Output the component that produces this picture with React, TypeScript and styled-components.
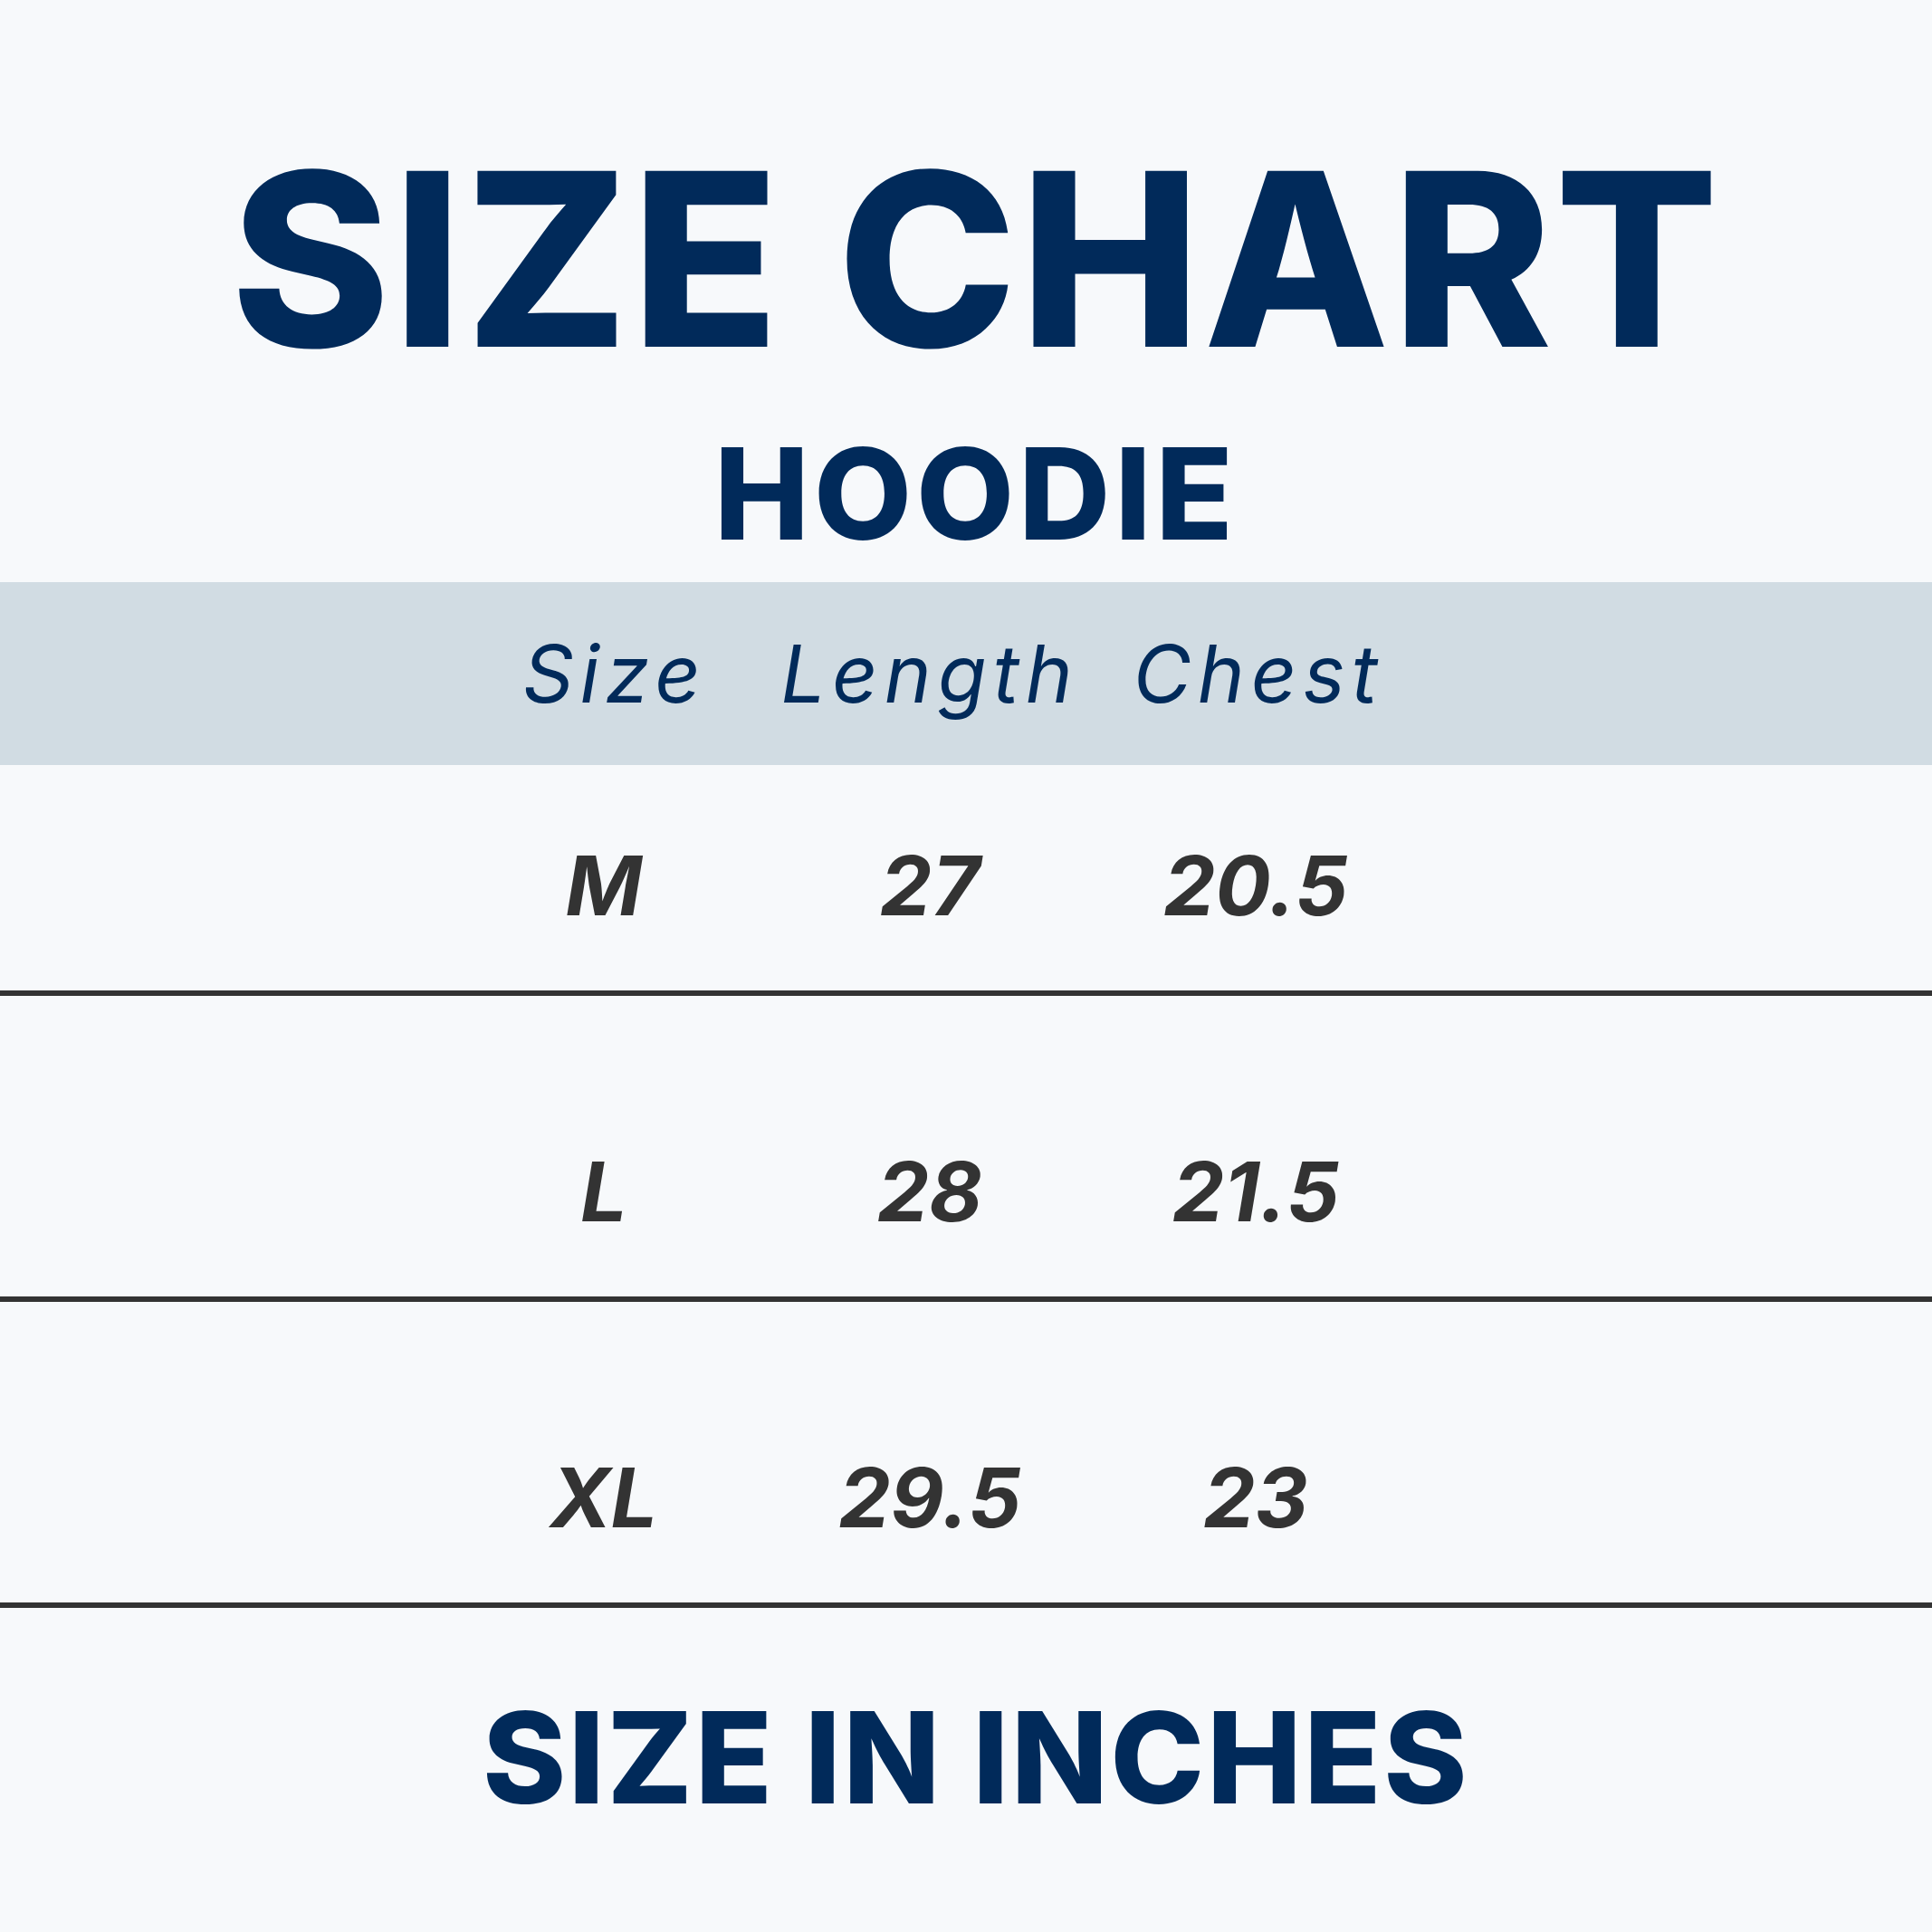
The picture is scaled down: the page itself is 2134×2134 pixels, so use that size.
import React from "react";
import styled, { createGlobalStyle } from "styled-components";

const GlobalStyle = createGlobalStyle`
  html, body {
    margin: 0;
    padding: 0;
    background: #f7f9fb;
  }
  body {
    font-family: Inter, "Noto Sans", "Liberation Sans", sans-serif;
  }
`;

const Page = styled.div`
  width: 2134px;
  min-height: 2134px;
  background: #f7f9fb;
  display: flex;
  flex-direction: column;
`;

const Heading = styled.header`
  display: flex;
  flex-direction: column;
  align-items: center;
  padding: 152px 0 0 22px;
  height: 643px;
  box-sizing: border-box;
`;

const Title = styled.h1`
  margin: 0;
  font-family: Inter, "Noto Sans", sans-serif;
  font-weight: 800;
  font-size: 267px;
  line-height: 1;
  letter-spacing: 3px;
  color: #012a5a;
`;

const Subtitle = styled.h2`
  margin: 56px 0 0;
  font-family: Inter, "Noto Sans", sans-serif;
  font-weight: 800;
  font-size: 140px;
  line-height: 1;
  letter-spacing: 5px;
  color: #012a5a;
`;

const Grid = styled.div`
  display: grid;
  grid-template-columns: repeat(3, 360px);
  padding-left: 487px;
  box-sizing: border-box;
  width: 100%;
`;

const HeaderBand = styled(Grid)`
  background: #d1dce3;
  height: 202px;
  align-items: center;
`;

const HeaderCell = styled.div<{ $shift?: number }>`
  text-align: center;
  font-family: Inter, "Noto Sans", sans-serif;
  font-style: italic;
  font-weight: 400;
  font-size: 88px;
  line-height: 1;
  letter-spacing: 7px;
  color: #012a5a;
  padding-left: ${(p) => p.$shift ?? 0}px;
`;

const Row = styled(Grid)<{ $top: number }>`
  padding-top: ${(p) => p.$top}px;
  padding-bottom: 70px;
  border-bottom: 6px solid #333333;
`;

const Cell = styled.div`
  text-align: center;
  font-family: Inter, "Noto Sans", sans-serif;
  font-style: italic;
  font-weight: 700;
  font-size: 91px;
  line-height: 1;
  color: #333333;
`;

const Footer = styled.footer`
  display: flex;
  justify-content: center;
  padding: 95px 0 0 22px;
`;

const FooterText = styled.div`
  font-family: Inter, "Noto Sans", sans-serif;
  font-weight: 800;
  font-size: 140px;
  line-height: 1;
  letter-spacing: 2.5px;
  color: #012a5a;
`;

const rows = [
  { size: "M", length: "27", chest: "20.5", top: 88 },
  { size: "L", length: "28", chest: "21.5", top: 171 },
  { size: "XL", length: "29.5", chest: "23", top: 171 },
];

export default function App() {
  return (
    <Page>
      <GlobalStyle />
      <Heading>
        <Title>SIZE CHART</Title>
        <Subtitle>HOODIE</Subtitle>
      </Heading>
      <HeaderBand>
        <HeaderCell $shift={24}>Size</HeaderCell>
        <HeaderCell $shift={-12}>Length</HeaderCell>
        <HeaderCell $shift={6}>Chest</HeaderCell>
      </HeaderBand>
      {rows.map((r) => (
        <Row key={r.size} $top={r.top}>
          <Cell>{r.size}</Cell>
          <Cell>{r.length}</Cell>
          <Cell>{r.chest}</Cell>
        </Row>
      ))}
      <Footer>
        <FooterText>SIZE IN INCHES</FooterText>
      </Footer>
    </Page>
  );
}
